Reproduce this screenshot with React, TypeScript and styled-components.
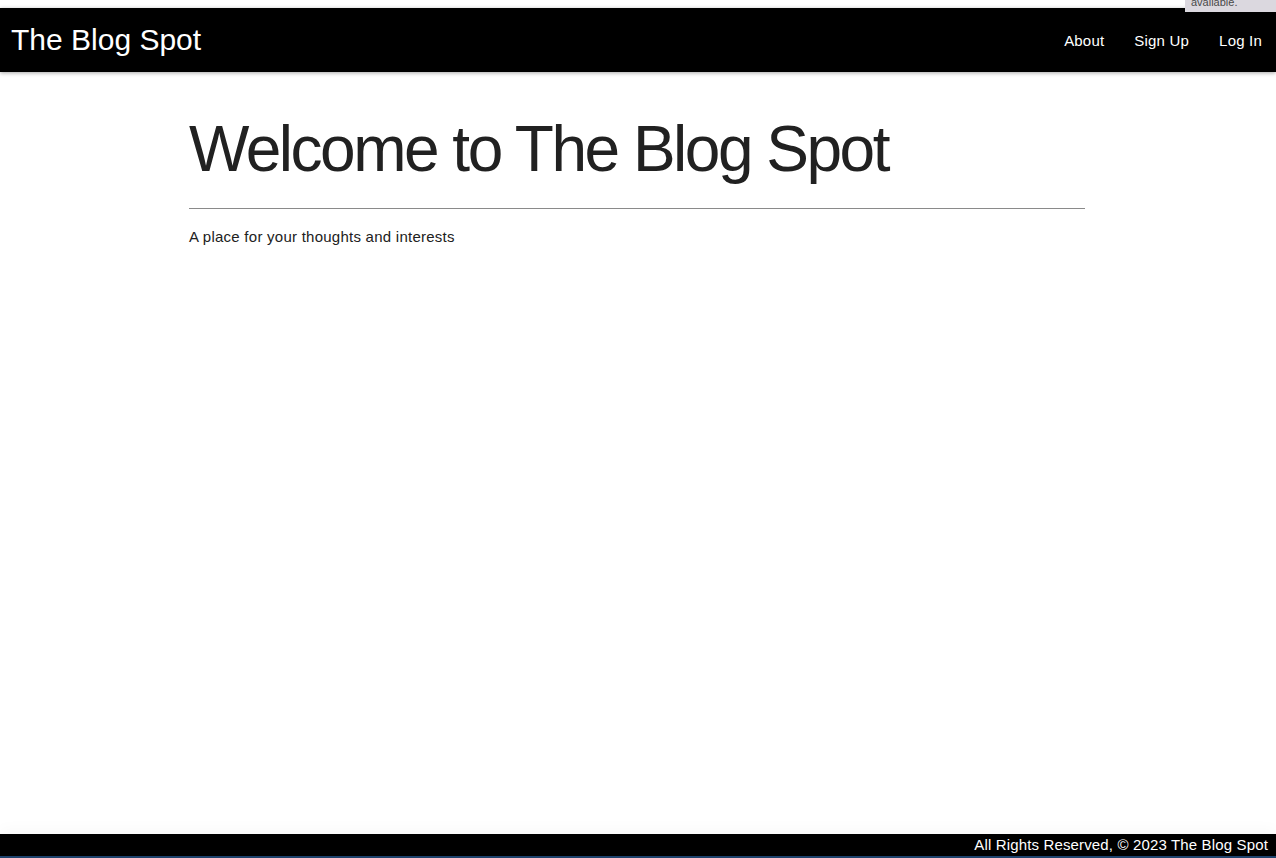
import React from "react";
import styled, { createGlobalStyle } from "styled-components";

const Global = createGlobalStyle`
  html, body { margin: 0; padding: 0; background: #ffffff; }
  body { font-family: "Liberation Sans", Arial, sans-serif; color: #212529; }
  * { box-sizing: border-box; }
`;

const Page = styled.div`
  min-height: 100vh;
  display: flex;
  flex-direction: column;
  padding-top: 8px;
  position: relative;
`;

const NavBar = styled.nav`
  height: 64px;
  background: #000;
  display: flex;
  align-items: center;
  justify-content: space-between;
  padding: 0 0 0 11px;
  box-shadow: 0 1px 4px rgba(0, 0, 0, 0.35);
  position: relative;
  z-index: 1;
`;

const Brand = styled.a`
  color: #fff;
  font-size: 30px;
  text-decoration: none;
  line-height: 1;
  margin-top: -1px;
`;

const NavLinks = styled.div`
  display: flex;
  align-items: center;
`;

const NavLink = styled.a`
  color: #fff;
  font-size: 15px;
  letter-spacing: 0.2px;
  text-decoration: none;
  padding: 0 14px 0 16px;
  &:first-child { padding-left: 0; }
`;

const Main = styled.main`
  flex: 1;
  width: 896px;
  margin-left: calc(50% - 449px);
  padding-top: 39px;
`;

const Title = styled.h1`
  margin: 0;
  font-size: 64px;
  font-weight: 400;
  line-height: 1.2;
  letter-spacing: -2.5px;
  color: #212121;
`;

const Rule = styled.hr`
  margin: 20px 0 0;
  border: 0;
  border-top: 1px solid #8a8a8a;
`;

const Lead = styled.p`
  margin: 19px 0 0;
  font-size: 15px;
  letter-spacing: 0.25px;
  color: #212121;
`;

const Footer = styled.footer`
  height: 24px;
  background: #000;
  color: #fff;
  display: flex;
  align-items: center;
  justify-content: flex-end;
  padding: 0 8px 1px 0;
  font-size: 15px;
  letter-spacing: 0.15px;
  border-bottom: 2px solid #1d426c;
  box-shadow: 0 -6px 14px rgba(0, 0, 0, 0.025);
`;

const Tip = styled.div`
  position: absolute;
  top: 0;
  right: 0;
  width: 91px;
  height: 12px;
  background: #dbd8df;
  overflow: hidden;
  z-index: 2;
`;

const TipText = styled.div`
  font-size: 11px;
  color: #4a4a4a;
  padding-left: 6px;
  line-height: 11px;
  margin-top: -3px;
`;

export default function App() {
  return (
    <>
      <Global />
      <Page>
        <Tip>
          <TipText>available.</TipText>
        </Tip>
        <NavBar>
          <Brand href="#">The Blog Spot</Brand>
          <NavLinks>
            <NavLink href="#">About</NavLink>
            <NavLink href="#">Sign Up</NavLink>
            <NavLink href="#">Log In</NavLink>
          </NavLinks>
        </NavBar>
        <Main>
          <Title>Welcome to The Blog Spot</Title>
          <Rule />
          <Lead>A place for your thoughts and interests</Lead>
        </Main>
        <Footer>All Rights Reserved, © 2023 The Blog Spot</Footer>
      </Page>
    </>
  );
}
